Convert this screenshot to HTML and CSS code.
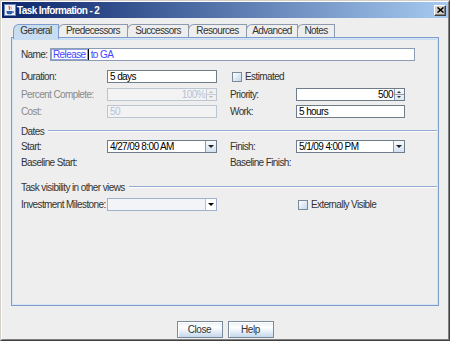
FILE: index.html
```html
<!DOCTYPE html>
<html>
<head>
<meta charset="utf-8">
<title>Task Information - 2</title>
<link rel="stylesheet" href="styles.css">
</head>
<body>
<div class="window">
  <div class="frame">
    <div class="titlebar">
      <svg class="app-icon" width="12" height="12" viewBox="0 0 12 12">
        <rect x="0.5" y="0.5" width="11" height="11" fill="#eef2fa" stroke="#6d86b8"/>
        <path d="M5.5 1.8c-1.4 1.3 1 2.2-0.4 4" stroke="#e0401a" fill="none" stroke-width="1.1"/>
        <path d="M7.3 2.6c-0.9 0.9 0.6 1.6-0.3 2.8" stroke="#f08020" fill="none" stroke-width="1"/>
        <path d="M2.5 7h6v1.3c0 1.2-0.9 2-2 2h-2c-1.1 0-2-0.8-2-2z" fill="#2f5cae"/>
        <path d="M8.5 7.6h0.9v1h-0.9" stroke="#2f5cae" fill="none" stroke-width="0.9"/>
      </svg>
      <span class="title">Task Information - 2</span>
      <span class="close-btn">
        <svg width="7" height="6" viewBox="0 0 7 6"><path d="M0.5 0.5L6.5 5.5M6.5 0.5L0.5 5.5" stroke="#000" stroke-width="1.6"/></svg>
      </span>
    </div>
    <div class="content">
      <div class="tabs">
        <div class="tab active">General</div>
        <div class="tab">Predecessors</div>
        <div class="tab">Successors</div>
        <div class="tab">Resources</div>
        <div class="tab">Advanced</div>
        <div class="tab">Notes</div>
      </div>
      <div class="panel">
        <div class="name-row">
          <span class="label name-label">Name:</span>
          <div class="field name-field"><span class="sel">Release</span><span class="caret"></span>&nbsp;to GA</div>
        </div>
        <div class="form">
          <span class="label c1">Duration:</span>
          <div class="field c2">5 days</div>
          <span class="check c4"><span class="box"></span>Estimated</span>

          <span class="label c1 disabled-label">Percent Complete:</span>
          <div class="field spinner disabled c2"><span class="val">100%</span><span class="spin off"><span class="up"></span><span class="down"></span></span></div>
          <span class="label c4">Priority:</span>
          <div class="field spinner c5"><span class="val">500</span><span class="spin"><span class="up"></span><span class="down"></span></span></div>

          <span class="label c1 disabled-label">Cost:</span>
          <div class="field disabled c2">50</div>
          <span class="label c4">Work:</span>
          <div class="field c5">5 hours</div>

          <div class="sep full"><span>Dates</span><i></i></div>

          <span class="label c1">Start:</span>
          <div class="field combo c2"><span class="val">4/27/09 8:00 AM</span><span class="arrow"></span></div>
          <span class="label c4">Finish:</span>
          <div class="field combo c5"><span class="val">5/1/09 4:00 PM</span><span class="arrow"></span></div>

          <span class="label c1 wide">Baseline Start:</span>
          <span class="label c4 wide">Baseline Finish:</span>

          <div class="sep full"><span>Task visibility in other views</span><i></i></div>

          <span class="label c1">Investment Milestone:</span>
          <div class="field combo blank c2"><span class="val"></span><span class="arrow"></span></div>
          <span class="check c5"><span class="box"></span>Externally Visible</span>
        </div>
      </div>
      <div class="buttons">
        <button class="btn">Close</button>
        <button class="btn">Help</button>
      </div>
    </div>
  </div>
</div>
</body>
</html>
```

FILE: styles.css
```css
* { box-sizing: border-box; }
html, body { margin: 0; padding: 0; }
body {
  width: 450px;
  height: 341px;
  overflow: hidden;
  background: #d4d0c8;
  font-family: "Liberation Sans", Arial, sans-serif;
  font-size: 10px;
  letter-spacing: -0.6px;
  color: #333;
}
.window {
  width: 450px;
  height: 341px;
  border: 1px solid;
  border-color: #d4d0c8 #404040 #404040 #d4d0c8;
}
.frame {
  height: 100%;
  border: 1px solid;
  border-color: #ffffff #808080 #808080 #ffffff;
  background: #eeeeee;
  display: flex;
  flex-direction: column;
}
.titlebar {
  flex: none;
  height: 16px;
  display: flex;
  align-items: center;
  padding: 0 2px 0 2px;
  background: linear-gradient(to right, #0a246a, #a6caf0);
}
.app-icon { flex: none; display: block; }
.title {
  margin-left: 1px;
  color: #fff;
  font-weight: bold;
  letter-spacing: -0.6px;
  flex: 1;
}
.close-btn {
  flex: none;
  width: 12px;
  height: 11px;
  display: flex;
  align-items: center;
  justify-content: center;
  background: #d4d0c8;
  border: 1px solid;
  border-color: #ffffff #404040 #404040 #ffffff;
  box-shadow: inset -1px -1px 0 #808080;
}
.close-btn svg { display: block; }

.content {
  flex: 1;
  display: flex;
  flex-direction: column;
  padding-top: 6px;
}
.tabs {
  display: flex;
  height: 13px;
  margin-left: 11px;
  position: relative;
  z-index: 1;
}
.tab {
  height: 13px;
  line-height: 12px;
  text-align: center;
  border: 1px solid #8e9bae;
  border-bottom: none;
  border-top-left-radius: 6px;
  background: #eeeeee;
  margin-right: -1px;
  color: #333;
}
.tab:nth-child(1) { width: 46px; }
.tab:nth-child(2) { width: 70px; }
.tab:nth-child(3) { width: 62px; }
.tab:nth-child(4) { width: 59px; }
.tab:nth-child(5) { width: 52px; }
.tab:nth-child(6) { width: 38px; }
.tab.active {
  height: 15px;
  background: #c8ddf2;
  border-color: #7e9ccc;
  position: relative;
  z-index: 2;
}

.panel {
  margin-left: 9px;
  width: 428px;
  height: 269px;
  border: 1px solid #7e9ccc;
  box-shadow: inset 0 0 0 1px #d6e4f3, inset 0 2px 0 #c8ddf2;
  padding: 10px 0 0 9px;
}
.name-row {
  display: flex;
  align-items: center;
  height: 13px;
}
.name-label { width: 29px; }

.form {
  margin-top: 9px;
  display: grid;
  grid-template-columns: 86px 110px 13px 66px 109px 32px;
  grid-template-rows: 18px 17px 20px 15px 17px 24px 17px 13px;
  align-items: start;
}
.c1 { grid-column: 1; }
.c2 { grid-column: 2; }
.c4 { grid-column: 4; }
.c5 { grid-column: 5; }
.c1.wide { grid-column: 1 / 3; }
.c4.wide { grid-column: 4 / 6; }
.full { grid-column: 1 / -1; }

.label {
  height: 13px;
  line-height: 13px;
  white-space: nowrap;
  color: #333;
}
.label.wide { height: 12px; line-height: 12px; }
.disabled-label { color: #8a8a8a; }

.field {
  height: 13px;
  line-height: 11px;
  border: 1px solid #6f7c8a;
  background: #fff;
  padding: 0 2px;
  color: #000;
  white-space: nowrap;
  overflow: hidden;
}
.field.disabled {
  background: #f3f3f3;
  border-color: #bcc6d3;
  color: #b3c1d6;
}
.field.name-field {
  width: 365px;
  color: #4545ff;
  border-color: #8c9cb4;
  display: flex;
  align-items: center;
  padding-left: 0;
}
.sel {
  display: inline-block;
  height: 11px;
  line-height: 10px;
  padding: 0 1px;
  border: 1px solid #8ea2da;
}
.caret {
  display: inline-block;
  width: 1px;
  height: 11px;
  background: #000;
}

.spinner {
  display: flex;
  padding: 0;
}
.spinner .val {
  flex: 1;
  text-align: right;
  padding-right: 1px;
}
.spin {
  width: 10px;
  flex: none;
  display: flex;
  flex-direction: column;
  border-left: 1px solid #8e9bae;
  background: linear-gradient(#f6f9fc, #dde8f3);
}
.spin span {
  flex: 1;
  position: relative;
}
.spin .up { border-bottom: 1px solid #8e9bae; }
.spin span::after {
  content: "";
  position: absolute;
  left: 2px;
  top: 2px;
  width: 0;
  height: 0;
  border-left: 2px solid transparent;
  border-right: 2px solid transparent;
}
.spin .up::after { border-bottom: 2px solid #333; }
.spin .down::after { border-top: 2px solid #333; top: 1px; }
.spin.off { background: #f0f0f0; border-left-color: #c3ccd7; }
.spin.off .up { border-bottom-color: #c3ccd7; }
.spin.off .up::after { border-bottom-color: #b9b9b9; }
.spin.off .down::after { border-top-color: #b9b9b9; }

.combo {
  display: flex;
  padding: 0;
}
.combo .val {
  flex: 1;
  padding-left: 2px;
}
.combo .arrow {
  width: 11px;
  flex: none;
  border-left: 1px solid #8e9bae;
  background: linear-gradient(#f8fbfd, #d3e1f0);
  position: relative;
}
.combo .arrow::after {
  content: "";
  position: absolute;
  left: 2px;
  top: 4px;
  border-left: 3px solid transparent;
  border-right: 3px solid transparent;
  border-top: 3px solid #222;
}
.field.combo.blank {
  background: #f2f4f8;
  border-color: #9fb2cc;
}
.combo.blank .arrow {
  background: #ffffff;
  border-left-color: #b4c2d4;
}
.combo.blank .arrow::after { border-top-color: #000; }

.check {
  display: flex;
  align-items: center;
  height: 13px;
  margin-left: 2px;
  white-space: nowrap;
  color: #333;
}
.check .box {
  width: 10px;
  height: 10px;
  flex: none;
  margin-right: 3px;
  border: 1px solid #7a8a99;
  background: linear-gradient(135deg, #ffffff, #c3d6ec);
}

.sep {
  display: flex;
  align-items: center;
  height: 12px;
  width: 416px;
}
.sep span { white-space: nowrap; color: #333; }
.sep i {
  flex: 1;
  height: 2px;
  margin-left: 4px;
  border-top: 1px solid #8fa9cf;
  border-bottom: 1px solid #ffffff;
}

.buttons {
  display: flex;
  justify-content: center;
  gap: 5px;
  margin-top: 15px;
}
.btn {
  width: 46px;
  height: 17px;
  padding: 0;
  margin: 0;
  font-family: "Liberation Sans", Arial, sans-serif;
  font-size: 10px;
  letter-spacing: -0.4px;
  color: #333;
  border: 1px solid #7a8a99;
  box-shadow: inset 1px 1px 0 #ffffff;
  background: linear-gradient(#e6eef7, #ffffff 35%, #c5d8ec);
}
```
